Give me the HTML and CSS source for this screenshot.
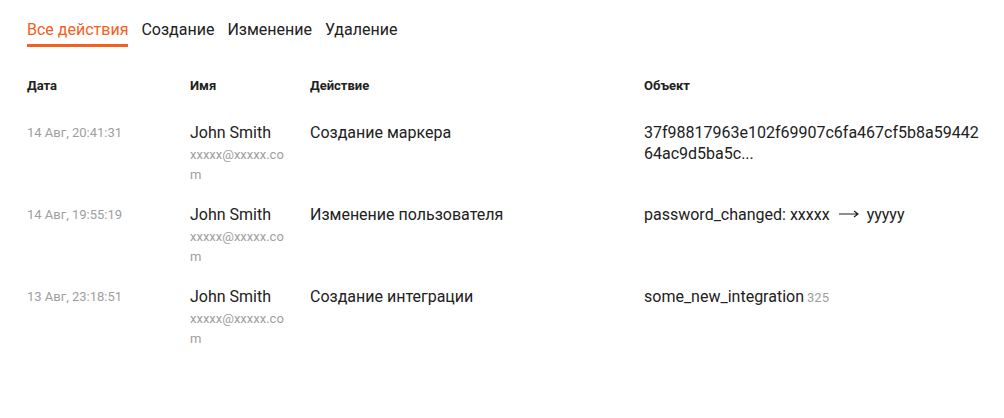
FILE: index.html
```html
<!DOCTYPE html>
<html lang="ru">
<head>
<meta charset="utf-8">
<title>Журнал действий</title>
<link rel="stylesheet" href="styles.css">
</head>
<body>
<div class="page">
  <nav class="tabs">
    <span class="tab tab-active">Все действия</span>
    <span class="tab">Создание</span>
    <span class="tab">Изменение</span>
    <span class="tab">Удаление</span>
  </nav>

  <div class="table">
    <div class="row head">
      <div>Дата</div>
      <div>Имя</div>
      <div>Действие</div>
      <div>Объект</div>
    </div>

    <div class="row">
      <div class="date">14 Авг, 20:41:31</div>
      <div class="user"><div class="name">John Smith</div><div class="email">xxxxx@xxxxx.com</div></div>
      <div class="action">Создание маркера</div>
      <div class="object hash">37f98817963e102f69907c6fa467cf5b8a5944264ac9d5ba5c...</div>
    </div>

    <div class="row">
      <div class="date">14 Авг, 19:55:19</div>
      <div class="user"><div class="name">John Smith</div><div class="email">xxxxx@xxxxx.com</div></div>
      <div class="action">Изменение пользователя</div>
      <div class="object">password_changed: xxxxx<svg class="arrow" width="20" height="10" viewBox="0 0 20 10"><path d="M0 5H19M15 2L19 5L15 8" fill="none" stroke="#212121" stroke-width="1.2"/></svg>yyyyy</div>
    </div>

    <div class="row">
      <div class="date">13 Авг, 23:18:51</div>
      <div class="user"><div class="name">John Smith</div><div class="email">xxxxx@xxxxx.com</div></div>
      <div class="action">Создание интеграции</div>
      <div class="object">some_new_integration<span class="id">325</span></div>
    </div>
  </div>
</div>
</body>
</html>
```

FILE: styles.css
```css
html, body {
  margin: 0;
  padding: 0;
  background: #ffffff;
}

body {
  font-family: Roboto, "Liberation Sans", Arial, sans-serif;
  color: #212121;
}

.page {
  padding: 20px 20px 0 27px;
}

.tabs {
  display: flex;
  gap: 13px;
}

.tab {
  font-size: 16px;
  line-height: 20px;
  padding-bottom: 4px;
  border-bottom: 3px solid transparent;
  color: #212121;
}

.tab-active {
  color: #f5601e;
  border-bottom-color: #f5601e;
}

.table {
  margin-top: 31px;
}

.row {
  display: grid;
  grid-template-columns: 163px 120px 334px 1fr;
  padding-bottom: 19px;
}

.row.head {
  font-size: 13px;
  font-weight: 700;
  line-height: 16px;
  padding-bottom: 28px;
}

.user {
  width: 100px;
}

.date {
  font-size: 13px;
  line-height: 21px;
  color: #9e9e9e;
}

.name {
  font-size: 16px;
  line-height: 21px;
}

.email {
  margin-top: 2px;
  font-size: 13px;
  line-height: 20px;
  color: #9e9e9e;
  word-break: break-all;
}

.action,
.object {
  font-size: 16px;
  line-height: 21px;
}

.hash {
  word-break: break-all;
}

.arrow {
  margin: 0 8px 0 9px;
  vertical-align: 1px;
}

.id {
  margin-left: 3px;
  font-size: 13px;
  color: #9e9e9e;
}
```
